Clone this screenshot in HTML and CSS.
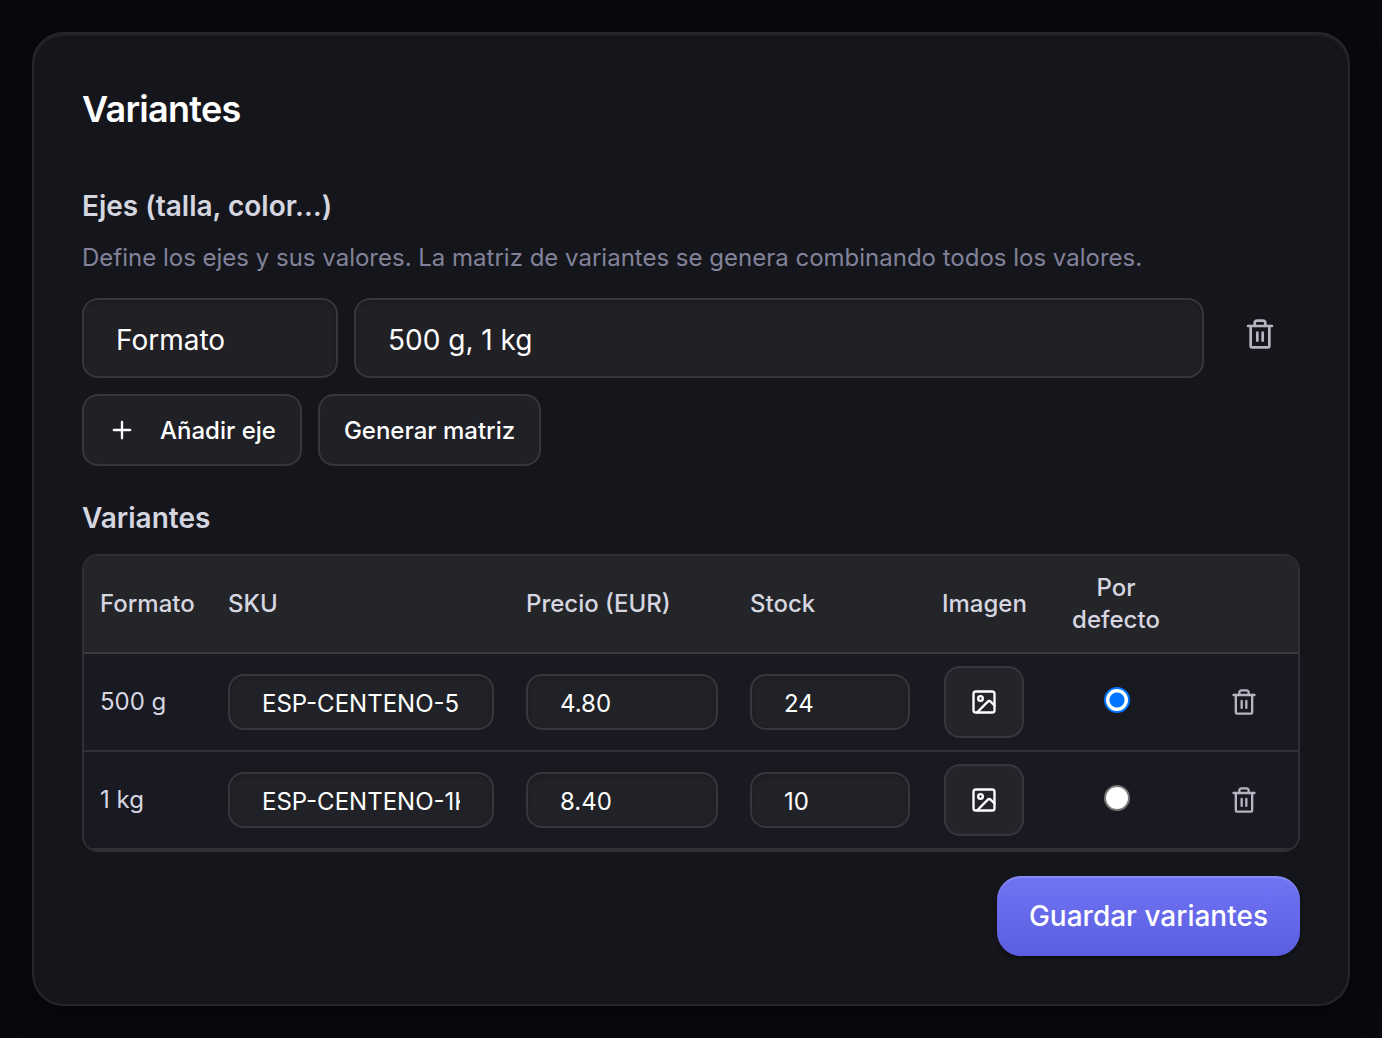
FILE: index.html
```html
<!DOCTYPE html>
<html lang="es">
  <head>
    <meta charset="UTF-8">
    <meta name="viewport" content="width=device-width, initial-scale=1">
    <title>Variantes</title>
    <link rel="stylesheet" href="styles.css">
  </head>
  <body>
    <!-- Shared icons -->
    <svg class="sprite" aria-hidden="true">
      <symbol id="icon-trash" viewBox="0 0 24 24">
        <path d="M3 6h18"/>
        <path d="M19 6v15a1 1 0 0 1-1 1H6a1 1 0 0 1-1-1V6"/>
        <path d="M8 6V4a2 2 0 0 1 2-2h4a2 2 0 0 1 2 2v2"/>
        <path d="M10 11v6M14 11v6"/>
      </symbol>
      <symbol id="icon-image" viewBox="0 0 24 24">
        <rect x="3" y="3" width="18" height="18" rx="2"/>
        <circle cx="9" cy="9" r="2"/>
        <path d="m21 15-3.086-3.086a2 2 0 0 0-2.828 0L6 21"/>
      </symbol>
      <symbol id="icon-plus" viewBox="0 0 24 24">
        <path d="M5 12h14M12 5v14"/>
      </symbol>
    </svg>

    <main class="card">
      <h1>Variantes</h1>
      <form id="variantsForm">
        <section class="axes">
          <h2>Ejes (talla, color…)</h2>
          <p class="hint">Define los ejes y sus valores. La matriz de variantes se genera combinando todos los valores.</p>
          <div class="axis-row">
            <input type="text" class="input" name="axis-name" value="Formato" aria-label="Nombre del eje">
            <input type="text" class="input" name="axis-values" value="500 g, 1 kg" aria-label="Valores del eje">
            <button type="button" class="btn-ghost" aria-label="Eliminar eje">
              <svg class="icon icon-lg"><use href="#icon-trash"/></svg>
            </button>
          </div>
          <div class="actions">
            <button type="button" class="btn">
              <svg class="icon"><use href="#icon-plus"/></svg>
              Añadir eje
            </button>
            <button type="button" class="btn">Generar matriz</button>
          </div>
        </section>

        <section class="variants">
          <h2>Variantes</h2>
          <div class="table-wrap">
            <table>
              <thead>
                <tr>
                  <th class="col-format">Formato</th>
                  <th>SKU</th>
                  <th class="col-price">Precio (EUR)</th>
                  <th class="col-stock">Stock</th>
                  <th class="col-image">Imagen</th>
                  <th class="col-default">Por defecto</th>
                  <th class="col-delete"></th>
                </tr>
              </thead>
              <tbody>
                <tr>
                  <td>500 g</td>
                  <td><input type="text" class="input input-sm" name="sku-1" value="ESP-CENTENO-500" aria-label="SKU"></td>
                  <td><input type="text" class="input input-sm" name="price-1" value="4.80" inputmode="decimal" aria-label="Precio"></td>
                  <td><input type="text" class="input input-sm" name="stock-1" value="24" inputmode="numeric" aria-label="Stock"></td>
                  <td class="center">
                    <button type="button" class="btn btn-icon" aria-label="Elegir imagen">
                      <svg class="icon"><use href="#icon-image"/></svg>
                    </button>
                  </td>
                  <td class="center"><input type="radio" class="radio" name="default" value="1" aria-label="Por defecto" checked></td>
                  <td class="center">
                    <button type="button" class="btn-ghost" aria-label="Eliminar variante">
                      <svg class="icon"><use href="#icon-trash"/></svg>
                    </button>
                  </td>
                </tr>
                <tr>
                  <td>1 kg</td>
                  <td><input type="text" class="input input-sm" name="sku-2" value="ESP-CENTENO-1KG" aria-label="SKU"></td>
                  <td><input type="text" class="input input-sm" name="price-2" value="8.40" inputmode="decimal" aria-label="Precio"></td>
                  <td><input type="text" class="input input-sm" name="stock-2" value="10" inputmode="numeric" aria-label="Stock"></td>
                  <td class="center">
                    <button type="button" class="btn btn-icon" aria-label="Elegir imagen">
                      <svg class="icon"><use href="#icon-image"/></svg>
                    </button>
                  </td>
                  <td class="center"><input type="radio" class="radio" name="default" value="2" aria-label="Por defecto"></td>
                  <td class="center">
                    <button type="button" class="btn-ghost" aria-label="Eliminar variante">
                      <svg class="icon"><use href="#icon-trash"/></svg>
                    </button>
                  </td>
                </tr>
              </tbody>
            </table>
          </div>
        </section>

        <div class="form-footer">
          <button type="submit" class="btn-primary">Guardar variantes</button>
        </div>
      </form>
    </main>
  </body>
</html>
```
FILE: styles.css
```css
* {
  box-sizing: border-box;
}

body {
  margin: 0;
  padding: 32px;
  font-family: Inter, sans-serif;
  font-size: 24px;
  line-height: 32px;
  color: #d6d6e0;
  background-color: #08080e;
}

.sprite {
  display: none;
}

.card {
  padding: 48px;
  border: 2px solid #26272b;
  border-radius: 32px;
  background-color: #15161b;
  box-shadow: inset 0 2px 0 #202125, 0 8px 32px rgba(0, 0, 0, 0.4);
}

h1 {
  margin: 0 0 50px;
  font-size: 36px;
  font-weight: 600;
  line-height: 54px;
  letter-spacing: -0.02em;
  color: #ffffff;
}

h2 {
  margin: 0 0 16px;
  font-size: 28px;
  font-weight: 600;
  line-height: 40px;
}

.hint {
  margin: 0 0 24px;
  color: #82829a;
}

.axis-row {
  display: grid;
  grid-template-columns: 256px 1fr 80px;
  gap: 16px;
  align-items: start;
}

.actions {
  display: flex;
  gap: 16px;
  margin-top: 16px;
}

.variants {
  margin-top: 32px;
}

.input {
  width: 100%;
  height: 80px;
  padding: 4px 32px 0;
  border: 2px solid #36363b;
  border-radius: 16px;
  background-color: #202025;
  box-shadow: inset 0 2px 4px rgba(0, 0, 0, 0.15);
  font-family: inherit;
  font-size: 28px;
  color: #ffffff;
}

.input-sm {
  display: block;
  height: 56px;
  padding-top: 2px;
  background-color: #212227;
  font-size: 24px;
}

.btn {
  display: inline-flex;
  align-items: center;
  justify-content: center;
  gap: 24px;
  height: 72px;
  padding: 0 24px;
  border: 2px solid #36373c;
  border-radius: 16px;
  background-color: #202126;
  font-family: inherit;
  font-size: 24px;
  font-weight: 500;
  color: #ffffff;
  cursor: pointer;
}

.btn-icon {
  width: 80px;
  background-color: #24252b;
}

.btn-ghost {
  display: flex;
  align-items: center;
  justify-content: center;
  width: 100%;
  height: 72px;
  padding: 0;
  border: none;
  background: none;
  color: #b4b4c2;
  cursor: pointer;
}

.btn-primary {
  height: 80px;
  padding: 0 32px;
  border: none;
  border-radius: 24px;
  background: linear-gradient(#7075f4, #5b5de0);
  box-shadow: inset 0 2px 0 rgba(255, 255, 255, 0.16), 0 2px 4px rgba(0, 0, 0, 0.4);
  font-family: inherit;
  font-size: 28px;
  font-weight: 500;
  color: #ffffff;
  cursor: pointer;
}

.icon {
  width: 28px;
  height: 28px;
  fill: none;
  stroke: currentColor;
  stroke-width: 2;
  stroke-linecap: round;
  stroke-linejoin: round;
}

.icon-lg {
  width: 32px;
  height: 32px;
}

.table-wrap {
  overflow: hidden;
  border: 2px solid #2f3035;
  border-radius: 16px;
}

table {
  width: 100%;
  table-layout: fixed;
  border-collapse: separate;
  border-spacing: 0;
}

th,
td {
  padding: 12px 16px;
  border-bottom: 2px solid #303137;
  text-align: left;
  vertical-align: middle;
}

th {
  padding: 16px;
  border-bottom-color: #3a3b41;
  background-color: #242529;
  font-weight: 500;
}

td {
  background-color: #191922;
}

.col-format {
  width: 128px;
}

.col-price {
  width: 224px;
}

.col-stock {
  width: 192px;
}

.col-image {
  width: 116px;
}

.col-default {
  width: 148px;
  text-align: center;
}

.col-delete {
  width: 108px;
}

.center {
  text-align: center;
}

.center .btn-icon {
  display: flex;
  margin: 0 auto;
}

.radio {
  appearance: none;
  width: 26px;
  height: 26px;
  margin: 0 0 6px 2px;
  border: 2px solid #767676;
  border-radius: 50%;
  background-color: #ffffff;
  vertical-align: middle;
}

.radio:checked {
  border-color: #0075ff;
  background-image: radial-gradient(circle, #0075ff 7px, #ffffff 8px);
}

.form-footer {
  display: flex;
  justify-content: flex-end;
  margin-top: 24px;
}
```
